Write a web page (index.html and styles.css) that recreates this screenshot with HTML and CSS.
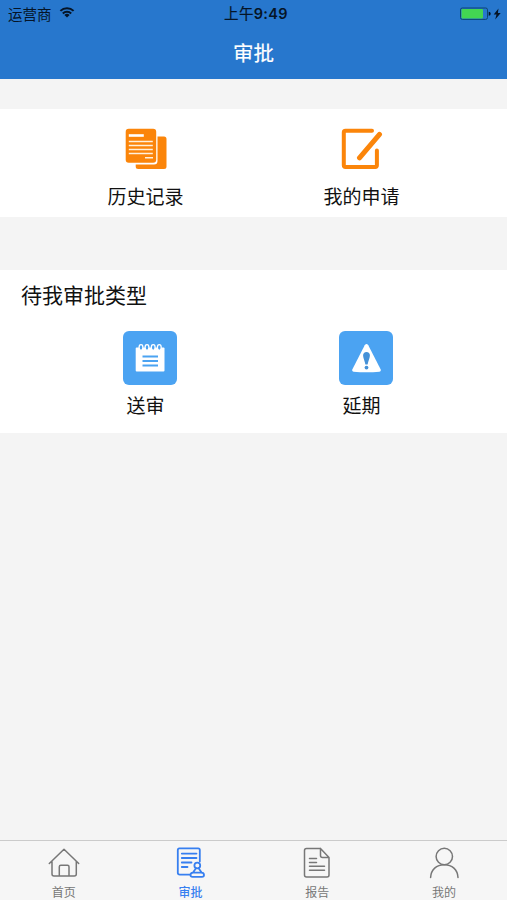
FILE: index.html
```html
<!DOCTYPE html>
<html lang="zh-CN">
<head>
<meta charset="utf-8">
<title>审批</title>
<link rel="stylesheet" href="styles.css">
</head>
<body>
<div class="screen">
  <header class="header">
    <div class="status">
      <div class="carrier">
        <span>运营商</span>
        <svg class="wifi" width="16" height="13" viewBox="0 0 16 13">
          <path d="M1.400 4.900a9.400 9.400 0 0 1 13.200 0M3.800 7.500a6 6 0 0 1 8.400 0" fill="none" stroke="#051426" stroke-width="2"/>
          <path d="M8 11.600 5.400 9.100a3.700 3.700 0 0 1 5.200 0Z" fill="#051426"/>
        </svg>
      </div>
      <div class="time"><span class="period">上午</span>9:49</div>
      <div class="power">
        <svg width="42" height="14" viewBox="0 0 42 14">
          <rect x="0.500" y="1" width="27" height="11.400" rx="1.800" fill="none" stroke="#0d4470" stroke-width="1"/>
          <rect x="1.500" y="2" width="21.500" height="9.400" rx=".8" fill="#43d552"/>
          <path d="M28.700 4.800a2 2 0 0 1 0 4Z" fill="#051426"/>
          <path d="M38.500 1.500 33.700 7.500h2.800L35.200 12.500l5.500-6.500h-2.800Z" fill="#051426"/>
        </svg>
      </div>
    </div>
    <h1 class="title">审批</h1>
  </header>

  <main class="content">
    <section class="panel shortcuts">
      <div class="grid">
        <a class="item">
          <svg width="44" height="44" viewBox="0 0 44 44">
            <path d="M34.500 9.500H41a2.500 2.500 0 0 1 2.500 2.500V39.500a2.500 2.500 0 0 1-2.500 2.500H15.200a2.500 2.500 0 0 1-2.500-2.500v-2H31a3.500 3.500 0 0 0 3.500-3.500Z" fill="#fb850a"/>
            <rect x="2.700" y="1.800" width="30.500" height="34" rx="3" fill="#fb850a"/>
            <path d="M5.800 8.500h15" stroke="#fff" stroke-width="2.600"/>
            <path d="M5.800 14.500h24M5.800 18.500h24M5.800 22.500h24M5.800 26.500h24M22 30.800h8" stroke="#fff0dc" stroke-width="1.500"/>
          </svg>
          <span>历史记录</span>
        </a>
        <a class="item">
          <svg width="44" height="44" viewBox="0 0 44 44" fill="none" stroke="#fb850a" stroke-linecap="round" stroke-linejoin="round">
            <path d="M33 3.700H6.500Q4.800 3.700 4.800 5.400V38.200Q4.800 39.900 6.500 39.900H36.200Q37.900 39.900 37.900 38.200V23.500" stroke-width="4"/>
            <path d="M20.500 30.800 40.500 7.300" stroke-width="5"/>
          </svg>
          <span>我的申请</span>
        </a>
      </div>
    </section>

    <section class="panel types">
      <h2 class="heading">待我审批类型</h2>
      <div class="grid">
        <a class="item">
          <svg width="54" height="54" viewBox="0 0 54 54">
            <rect width="54" height="54" rx="6" fill="#4ba3f2"/>
            <rect x="12.700" y="16.500" width="28.800" height="24" rx="1" fill="#fff"/>
            <g fill="#4ba3f2" stroke="#fff" stroke-width="1.300">
              <ellipse cx="18" cy="16.500" rx="1.900" ry="2.800"/>
              <ellipse cx="24" cy="16.500" rx="1.900" ry="2.800"/>
              <ellipse cx="30.200" cy="16.500" rx="1.900" ry="2.800"/>
              <ellipse cx="36.300" cy="16.500" rx="1.900" ry="2.800"/>
            </g>
            <path d="M19.500 25.500h15.500M19.500 30h15.500M19.500 34.500h15.500" stroke="#4ba3f2" stroke-width="1.900"/>
          </svg>
          <span>送审</span>
        </a>
        <a class="item">
          <svg width="54" height="54" viewBox="0 0 54 54">
            <rect width="54" height="54" rx="6" fill="#4ba3f2"/>
            <path d="M25.700 14.300Q27.500 11.500 29.300 14.300L41.700 38.500Q42.400 40.500 40.500 40.700 27.500 41.700 14.500 40.700 12.600 40.500 13.300 38.500Z" fill="#fff"/>
            <path d="M27.500 21a3.400 3.400 0 0 1 3.400 3.700C30.700 27.700 29.300 29.500 28.600 33.500h-2.200C25.700 29.500 24.300 27.700 24.100 24.700A3.400 3.400 0 0 1 27.500 21Z" fill="#4491d8"/>
            <circle cx="27.500" cy="36.600" r="1.900" fill="#4491d8"/>
          </svg>
          <span>延期</span>
        </a>
      </div>
    </section>
  </main>

  <nav class="tabs">
    <a class="tab">
      <svg width="32" height="32" viewBox="0 0 32 32">
        <path d="M1.300 16.500 16 2.200 30.700 16.500M4 14.500V27Q4 29 6 29H26.300Q28.300 29 28.300 27V14.500M11.300 29V19.800Q11.300 18.300 12.800 18.300H19.500Q21 18.300 21 19.800V29"/>
      </svg>
      <span>首页</span>
    </a>
    <a class="tab active">
      <svg width="32" height="32" viewBox="0 0 32 32">
        <path d="M14.800 27.700H4.800Q2.800 27.700 2.800 25.700V3Q2.800 1.400 4.400 1.400H23.200Q24.800 1.400 24.800 3V14.500M6.800 6.600H21.500M6.800 11H21.500M6.800 15.500H16.500M6.800 20H12.500"/>
        <circle cx="22.300" cy="18.500" r="2.900"/>
        <path d="M21 21.300 17.800 25.700M23.600 21.300 26.800 25.700M17.800 25.700H26.800Q29 25.900 29 28 29 29.900 27 29.900H17.500Q15.500 29.900 15.500 28 15.500 25.900 17.800 25.700Z"/>
      </svg>
      <span>审批</span>
    </a>
    <a class="tab">
      <svg width="32" height="32" viewBox="0 0 32 32">
        <path d="M19.500 1.500H5.500Q3.500 1.500 3.500 3.500V28Q3.500 30 5.500 30H26Q28 30 28 28V10.500L19.500 1.500V8.500Q19.500 10.500 21.500 10.500H28M8.500 11.500H15.500M8.500 15.500H15.500M8.500 19.300H23.500M8.500 23.300H23.500"/>
      </svg>
      <span>报告</span>
    </a>
    <a class="tab">
      <svg width="32" height="32" viewBox="0 0 32 32">
        <circle cx="16.300" cy="9.500" r="8.200"/>
        <path d="M2.600 30.500C3 22.500 8.500 17.700 16.300 17.700S29.600 22.500 30 30.500"/>
      </svg>
      <span>我的</span>
    </a>
  </nav>
</div>
</body>
</html>
```

FILE: styles.css
```css
* {
  box-sizing: border-box;
}

body {
  margin: 0;
  background: #f4f4f4;
  color: #111;
  font-family: "Noto Sans CJK SC", sans-serif;
}

.screen {
  display: flex;
  flex-direction: column;
  height: 900px;
}

.header {
  height: 79px;
  background: #2777cd;
}

.status {
  display: grid;
  grid-template-columns: 1fr auto 1fr;
  align-items: center;
  height: 27px;
  padding: 0 5px 0 8px;
  color: #051426;
  font-size: 14.5px;
  line-height: 27px;
}

.carrier {
  display: flex;
  align-items: center;
  gap: 7px;
}

.wifi {
  margin-bottom: 2px;
}

.time {
  padding-left: 2px;
  font-family: Inter, "Noto Sans CJK SC", sans-serif;
  font-weight: 600;
  font-size: 14.5px;
  letter-spacing: 0.35px;
}

.period {
  font-weight: 400;
  -webkit-text-stroke: 0.2px #051426;
}

.power {
  display: flex;
  justify-content: flex-end;
}

.title {
  margin: 0;
  color: #fff;
  font-size: 20.5px;
  font-weight: 400;
  line-height: 50px;
  text-align: center;
  -webkit-text-stroke: 0.2px #fff;
}

.content {
  flex: 1;
}

.panel {
  background: #fff;
}

.shortcuts {
  height: 108px;
  margin-top: 30px;
  padding-top: 18px;
}

.types {
  height: 163px;
  margin-top: 53px;
}

.heading {
  margin: 0;
  padding-left: 21px;
  font-size: 21px;
  font-weight: 400;
  line-height: 48px;
  height: 61px;
}

.grid {
  display: grid;
  grid-template-columns: 216px 216px;
  justify-content: center;
}

.item {
  display: flex;
  flex-direction: column;
  align-items: center;
  font-size: 19px;
  line-height: 28px;
}

.shortcuts .item {
  gap: 11px;
}

.shortcuts svg {
  margin-right: 1px;
}

.types .item {
  gap: 6px;
}

.types svg {
  margin-left: 9px;
}

.tabs {
  display: grid;
  grid-template-columns: repeat(4, 1fr);
  height: 60px;
  border-top: 1px solid #cbcbcb;
  background: #f6f6f6;
}

.tab {
  display: flex;
  flex-direction: column;
  align-items: center;
  gap: 4px;
  padding: 6px 0 0 1px;
  color: #777;
  font-size: 12px;
  line-height: 18px;
}

.tab svg {
  fill: none;
  stroke: currentColor;
  stroke-width: 1.5;
  stroke-linecap: round;
  stroke-linejoin: round;
}

.active {
  color: #377ff0;
  font-weight: 500;
}

.active svg {
  stroke-width: 1.8;
}
```
